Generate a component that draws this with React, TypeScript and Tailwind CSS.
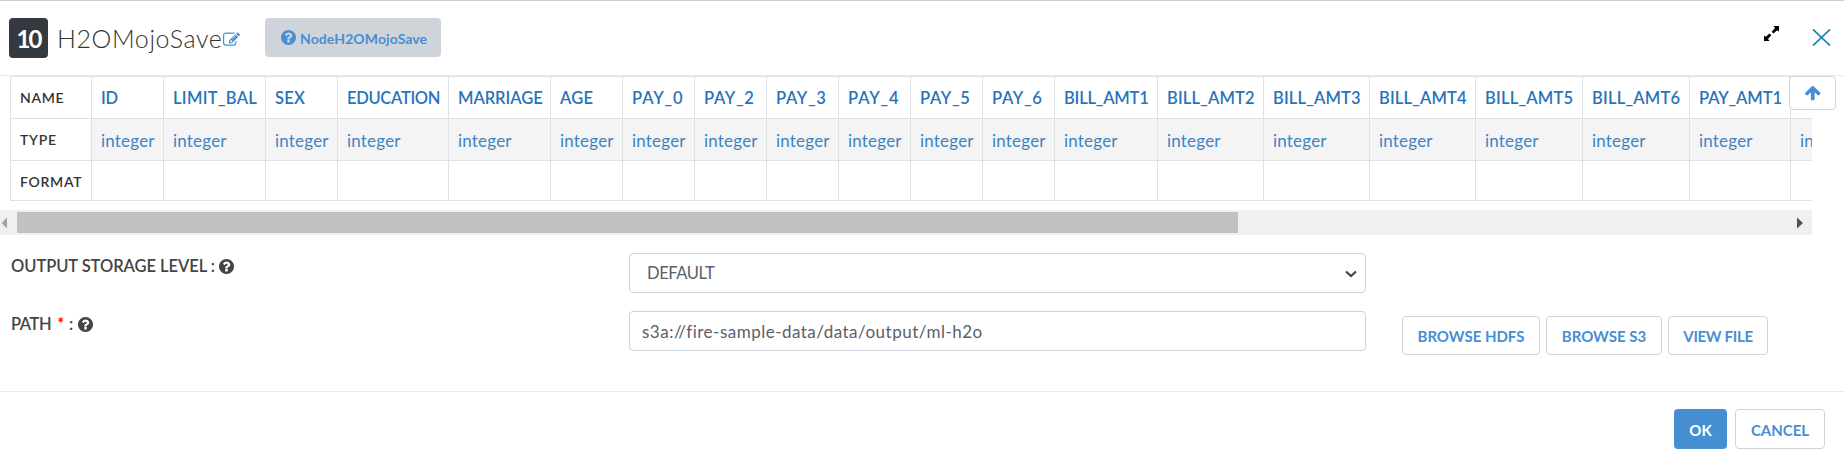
type Column = { name: string; width: string; tracking: string };

const columns: Column[] = [
  { name: "ID", width: "w-[72px]", tracking: "tracking-[-0.2px]" },
  { name: "LIMIT_BAL", width: "w-[102px]", tracking: "tracking-[0.3px]" },
  { name: "SEX", width: "w-[72px]", tracking: "tracking-[0.2px]" },
  { name: "EDUCATION", width: "w-[111px]", tracking: "tracking-[-0.3px]" },
  { name: "MARRIAGE", width: "w-[102px]", tracking: "tracking-[-0.05px]" },
  { name: "AGE", width: "w-[72px]", tracking: "tracking-[0.2px]" },
  { name: "PAY_0", width: "w-[72px]", tracking: "tracking-[0.9px]" },
  { name: "PAY_2", width: "w-[72px]", tracking: "tracking-[0.7px]" },
  { name: "PAY_3", width: "w-[72px]", tracking: "tracking-[0.7px]" },
  { name: "PAY_4", width: "w-[72px]", tracking: "tracking-[0.9px]" },
  { name: "PAY_5", width: "w-[72px]", tracking: "tracking-[0.7px]" },
  { name: "PAY_6", width: "w-[72px]", tracking: "tracking-[0.7px]" },
  { name: "BILL_AMT1", width: "w-[103px]", tracking: "tracking-[-0.2px]" },
  { name: "BILL_AMT2", width: "w-[106px]", tracking: "tracking-[0.15px]" },
  { name: "BILL_AMT3", width: "w-[106px]", tracking: "tracking-[0.15px]" },
  { name: "BILL_AMT4", width: "w-[106px]", tracking: "tracking-[0.15px]" },
  { name: "BILL_AMT5", width: "w-[107px]", tracking: "tracking-[0.2px]" },
  { name: "BILL_AMT6", width: "w-[107px]", tracking: "tracking-[0.2px]" },
  { name: "PAY_AMT1", width: "w-[101px]", tracking: "tracking-[-0.1px]" },
  { name: "", width: "w-[106px]", tracking: "tracking-normal" },
];

const cell = "shrink-0 border-l border-t border-[#dee2e6] pl-[9px] whitespace-nowrap";
const rowLabel = "w-[81px] text-[14px] font-semibold tracking-[0.7px] text-[#333]";
const outlineButton =
  "flex items-center justify-center rounded border border-[#ced4da] bg-white text-[15px] font-bold text-[#468fd3] whitespace-nowrap";

function HelpIcon({ className }: { className: string }) {
  return (
    <svg className={`size-[15px] ${className}`} viewBox="128 128 1536 1536" fill="currentColor">
      <path d="M1024 1376v-192q0-14-9-23t-23-9h-192q-14 0-23 9t-9 23v192q0 14 9 23t23 9h192q14 0 23-9t9-23zm256-672q0-88-55.500-163t-138.500-116-170-41q-243 0-371 213-15 24 8 42l132 100q7 6 19 6 16 0 25-12 53-68 86-92 34-24 86-24 48 0 85.500 26t37.500 59q0 38-20 61t-68 45q-63 28-115.500 86.500t-52.500 125.500v36q0 14 9 23t23 9h192q14 0 23-9t9-23q0-19 21.500-49.500t54.500-49.500q32-18 49-28.500t46-35 44.500-48 28-60.500 12.500-81zm384 192q0 209-103 385.500t-279.500 279.500-385.500 103-385.500-103-279.500-279.500-103-385.500 103-385.500 279.500-279.500 385.500-103 385.500 103 279.500 279.500 103 385.500z" />
    </svg>
  );
}

function SchemaTable() {
  return (
    <div className="h-[134px] w-[1812px] overflow-hidden pl-[10px]">
      <div className="flex h-[42px]">
        <div className={`${cell} ${rowLabel} leading-[42px]`}>NAME</div>
        {columns.map((c) => (
          <div key={c.name} className={`${cell} ${c.width} ${c.tracking} text-[16.5px] font-semibold leading-[43px] text-[#2874ba]`}>
            {c.name}
          </div>
        ))}
      </div>
      <div className="flex h-[42px]">
        <div className={`${cell} ${rowLabel} leading-[42px]`}>TYPE</div>
        {columns.map((c) => (
          <div key={c.name} className={`${cell} ${c.width} bg-[#f4f4f4] text-[17px] leading-[43px] tracking-[0.2px] text-[#3d84c4]`}>
            integer
          </div>
        ))}
      </div>
      <div className="flex h-[41px]">
        <div className={`${cell} ${rowLabel} border-b leading-[42px]`}>FORMAT</div>
        {columns.map((c) => (
          <div key={c.name} className={`${cell} ${c.width} border-b`} />
        ))}
      </div>
    </div>
  );
}

function ScrollBar() {
  return (
    <div className="flex h-[25px] w-[1812px] items-center bg-[#f0f0f0]">
      <svg className="ml-px h-3 w-4" viewBox="0 0 16 12">
        <path d="M6 0.5V11.5L0.5 6Z" fill="#a3a3a3" />
      </svg>
      <div className="h-[21px] w-[1221px] bg-[#c1c1c1]" />
      <svg className="ml-auto mr-[9px] h-3 w-[6px]" viewBox="0 0 6 12">
        <path d="M0 0.5V11.5L6 6Z" fill="#505050" />
      </svg>
    </div>
  );
}

export default function App() {
  return (
    <div className="flex h-[462px] w-[1844px] flex-col overflow-hidden border-t border-[#ccc] bg-white font-['Lato',sans-serif]">
      <header className="flex h-[75px] items-start border-b border-[#e9ecef] pl-[9px]">
        <div className="mt-[17px] flex h-10 w-[39px] items-center justify-center rounded bg-[#343a40] pt-px text-[24px] font-bold tracking-[-2px] text-white">
          10
        </div>
        <h1 className="mt-[17px] ml-[9px] w-[166px] text-[25px] font-light leading-[40px] tracking-[0.6px] text-[#333] whitespace-nowrap">
          H2OMojoSave
        </h1>
        <svg className="mt-[31px] h-4 w-[17px]" viewBox="0 0 1792 1600" fill="#468fd3">
          <path d="M888 1056l116-116-152-152-116 116v56h96v96h56zm440-720q-16-16-33 1l-350 350q-17 17-1 33t33-1l350-350q17-17 1-33zm80 594v190q0 119-84.500 203.500t-203.500 84.500h-832q-119 0-203.500-84.500t-84.500-203.500v-832q0-119 84.500-203.500t203.500-84.500h832q63 0 117 25 15 7 18 23 3 17-9 29l-49 49q-14 14-32 8-23-6-45-6h-832q-66 0-113 47t-47 113v832q0 66 47 113t113 47h832q66 0 113-47t47-113v-126q0-13 9-22l64-64q15-15 35-7t20 29zm-96-738l288 288-672 672h-288v-288zm444 132l-92 92-288-288 92-92q28-28 68-28t68 28l152 152q28 28 28 68t-28 68z" />
        </svg>
        <div className="mt-[17px] ml-[25px] flex h-[39px] w-[176px] items-center rounded bg-[#ced4da] pl-[16px] text-[14px] font-bold tracking-[0.1px] text-[#468fd3]">
          <HelpIcon className="mr-[4px]" />
          <span className="mt-[2px]">NodeH2OMojoSave</span>
        </div>
        <svg className="mt-[25px] ml-auto size-[15px]" viewBox="0 0 15 15" fill="#000">
          <path d="M9.500 0H15V5.500L13.200 4.200L9.500 7.500L7.700 5.700L11 2ZM0 9.500L1.800 10.800L5.500 7.500L7.300 9.300L4 13L5.500 15H0Z" />
        </svg>
        <svg className="mt-[28px] mr-[13px] ml-[33px] h-[17px] w-[19px]" viewBox="0 0 19 17" fill="none" stroke="#0f7fb5" strokeWidth="1.7">
          <path d="M1 0.5L18 16.500M18 0.5L1 16.500" />
        </svg>
      </header>

      <div className="relative">
        <SchemaTable />
        <button className="absolute top-0 left-[1789px] flex h-[34px] w-[47px] items-center justify-center rounded border border-[#ced4da] bg-white">
          <svg className="size-[17.5px]" viewBox="0 0 1792 1792" fill="#468fd3">
            <path d="M1675 971q0 51-37 90l-75 75q-38 38-91 38-54 0-90-38l-294-293v704q0 52-37.500 84.500t-90.500 32.500h-128q-53 0-90.500-32.500t-37.500-84.500v-704l-294 293q-36 38-90 38t-90-38l-75-75q-38-38-38-90 0-53 38-91l651-651q35-37 90-37 54 0 91 37l651 651q37 39 37 91z" />
          </svg>
        </button>
      </div>
      <ScrollBar />

      <div className="flex h-[58px] pt-[18px] pl-[11px]">
        <div className="flex h-[26px] w-[618px] items-center text-[16.5px] font-semibold tracking-[-0.05px] text-[#444]">
          OUTPUT STORAGE LEVEL :<HelpIcon className="ml-[4px]" />
        </div>
        <div className="flex h-10 w-[737px] items-center justify-between rounded border border-[#ced4da] pt-px pr-[8px] pl-[17px] text-[16.5px] tracking-[-0.4px] text-[#596067]">
          DEFAULT
          <svg className="h-2 w-3" viewBox="0 0 12 8" fill="none" stroke="#3f464d" strokeWidth="2.200">
            <path d="M1 1.500L6 6L11 1.500" />
          </svg>
        </div>
      </div>
      <div className="flex h-[99px] border-b border-[#e9ecef] pt-[18px] pl-[11px]">
        <div className="flex h-[26px] w-[618px] items-center text-[16.5px] font-semibold tracking-[-0.4px] text-[#444]">
          PATH<span className="ml-[6px] text-[#f00]">*</span>
          <span className="ml-[5px]">:</span>
          <HelpIcon className="ml-[5px]" />
        </div>
        <div className="flex h-10 w-[737px] items-center rounded border border-[#ced4da] pt-px pl-[12px] text-[17px] tracking-[0.49px] text-[#596067]">
          s3a://fire-sample-data/data/output/ml-h2o
        </div>
        <div className="mt-[5px] ml-[36px] flex gap-[6px]">
          <button className={`${outlineButton} h-[39px] w-[138px] pt-[2px]`}>BROWSE HDFS</button>
          <button className={`${outlineButton} h-[39px] w-[116px] pt-[2px]`}>BROWSE S3</button>
          <button className={`${outlineButton} h-[39px] w-[100px] pt-[2px] tracking-[-0.3px]`}>VIEW FILE</button>
        </div>
      </div>

      <footer className="flex justify-end gap-2 pt-[17px] pr-[19px]">
        <button className="h-10 w-[53px] rounded bg-[#468fd3] pt-[2px] text-[15px] font-bold text-white">OK</button>
        <button className={`${outlineButton} h-10 w-[90px] pt-[2px]`}>CANCEL</button>
      </footer>
    </div>
  );
}
